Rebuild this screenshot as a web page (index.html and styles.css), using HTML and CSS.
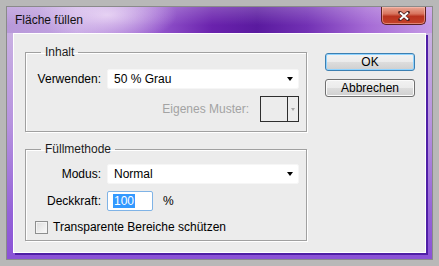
FILE: index.html
```html
<!DOCTYPE html>
<html>
<head>
<meta charset="utf-8">
<title>Fläche füllen</title>
<link rel="stylesheet" href="styles.css">
</head>
<body>
<div class="window">
<div class="titlebar">
<span class="title">Fläche füllen</span>
<span class="close">
<svg width="12" height="10" viewBox="0 0 12 10">
<path d="M2 1.5L10 8.5M10 1.5L2 8.5" stroke="#4a2020" stroke-width="3.6" stroke-linecap="round"/>
<path d="M2 1.5L10 8.5M10 1.5L2 8.5" stroke="#fff" stroke-width="2"/>
</svg>
</span>
</div>
<div class="frame">
<div class="content">
<div class="groups">
<fieldset class="group group-fill">
<legend>Inhalt</legend>
<div class="row">
<label class="label">Verwenden:</label>
<div class="select"><span>50 % Grau</span><span class="arrow"></span></div>
</div>
<div class="row row-pattern">
<label class="muted">Eigenes Muster:</label>
<div class="pattern"><span class="pattern-swatch"></span><span class="pattern-btn"><span class="pattern-arrow"></span></span></div>
</div>
</fieldset>
<fieldset class="group group-mode">
<legend>Füllmethode</legend>
<div class="row">
<label class="label">Modus:</label>
<div class="select"><span>Normal</span><span class="arrow"></span></div>
</div>
<div class="row">
<label class="label">Deckkraft:</label>
<div class="input"><span class="selected">100</span></div>
<span class="unit">%</span>
</div>
<div class="row row-check">
<span class="checkbox"></span>
<label>Transparente Bereiche schützen</label>
</div>
</fieldset>
</div>
<div class="buttons">
<button class="btn btn-default">OK</button>
<button class="btn">Abbrechen</button>
</div>
</div>
</div>
</div>
</body>
</html>
```

FILE: styles.css
```css
*{
margin: 0;
padding: 0;
box-sizing: border-box;
}
body{
background: #b8b8b8;
padding: 6px;
font-family: "Liberation Sans", Arial, sans-serif;
font-size: 12px;
color: #000;
}
.window{
width: 427px;
height: 254px;
border: 1px solid #8a8a8a;
display: flex;
flex-direction: column;
}
.titlebar{
height: 26px;
display: flex;
justify-content: space-between;
align-items: flex-start;
background:
linear-gradient(to bottom, rgba(255,255,255,0.2), rgba(255,255,255,0) 70%),
radial-gradient(ellipse 70px 28px at 100px 8px, rgba(236,216,246,0.85), rgba(236,216,246,0)),
linear-gradient(to right, #b899d9 0, #c2a3e2 70px, #9457cd 150px, #6a22ad 205px, #5a1a9f 250px, #7231b4 300px, #a56ad5 360px, #c59be5 425px);
}
.title{
padding: 6px 0 0 8px;
line-height: 14px;
color: #111;
}
.close{
width: 45px;
height: 18px;
margin-right: 6px;
border: 1px solid #5a2020;
border-top: none;
border-radius: 0 0 5px 5px;
background: linear-gradient(to bottom, #e9a796 0, #d8735d 40%, #b9321e 55%, #c4432b 100%);
display: flex;
justify-content: center;
align-items: center;
box-shadow: inset 0 0 0 1px rgba(255,200,190,0.5);
}
.frame{
flex: 1;
padding: 0 6px 6px 6px;
background: linear-gradient(to bottom, #c9b0e2 0, #b793df 40%, #9462d8 80%, #8a52d6 100%);
}
.content{
height: 100%;
background: #ececec;
border: 1px solid #fff;
box-shadow: 2px 2px 0 #4f1fa6;
display: flex;
gap: 18px;
padding: 11px 0 0 11px;
}
.group{
width: 282px;
border: 1px solid #a0a0a0;
box-shadow: inset 1px 1px 0 #fff, 1px 1px 0 #fff;
padding: 0 7px 0 0;
min-width: 0;
}
.group legend{
margin-left: 15px;
padding: 0 4px;
line-height: 14px;
color: #1c1c1c;
}
.group-fill{
padding-top: 10px;
padding-bottom: 9px;
}
.group-mode{
margin-top: 10px;
padding-top: 8px;
padding-bottom: 5px;
}
.row{
display: flex;
align-items: center;
}
.row + .row{
margin-top: 7px;
}
.label{
width: 75px;
margin-right: 6px;
text-align: right;
}
.select{
flex: 1;
height: 20px;
background: #fff;
border: 1px solid #f6f6f6;
border-radius: 2px;
display: flex;
justify-content: space-between;
align-items: center;
padding: 0 5px 0 6px;
}
.arrow{
width: 0;
height: 0;
border-left: 3px solid transparent;
border-right: 3px solid transparent;
border-top: 4px solid #000;
}
.row-pattern{
justify-content: flex-end;
}
.muted{
color: #a3a3a3;
margin-right: 11px;
}
.pattern{
width: 39px;
height: 26px;
border: 1px solid #2e2e2e;
display: flex;
}
.pattern-swatch{
flex: 1;
}
.pattern-btn{
width: 11px;
border-left: 1px solid #2e2e2e;
display: flex;
justify-content: center;
align-items: center;
}
.pattern-arrow{
width: 0;
height: 0;
border-left: 2px solid transparent;
border-right: 2px solid transparent;
border-top: 3px solid #a8a8a8;
}
.input{
width: 46px;
height: 20px;
background: #fff;
border: 1px solid #7fb3e6;
border-radius: 2px;
padding-left: 5px;
display: flex;
align-items: center;
}
.selected{
background: #3399ff;
color: #fff;
padding: 0 1px;
line-height: 14px;
}
.unit{
margin-left: 10px;
}
.row-check{
height: 16px;
}
.row.row-check{
margin-top: 8px;
}
.checkbox{
width: 13px;
height: 13px;
margin: 0 5px 0 9px;
border: 1px solid #8e8f8f;
background: linear-gradient(135deg, #dcdcdc, #fafafa);
box-shadow: inset 0 0 0 1px #f4f4f4;
}
.buttons{
display: flex;
flex-direction: column;
gap: 8px;
padding-top: 8px;
}
.btn{
width: 90px;
height: 18px;
font-family: "Liberation Sans", Arial, sans-serif;
font-size: 12px;
color: #000;
border: 1px solid #707070;
border-radius: 3px;
background: linear-gradient(to bottom, #f2f2f2 0, #ebebeb 50%, #dddddd 51%, #cfcfcf 100%);
box-shadow: inset 0 0 0 1px #fbfbfb;
}
.btn-default{
border-color: #3c7fb1;
box-shadow: inset 0 0 0 1px #8fd3ff;
}
```
